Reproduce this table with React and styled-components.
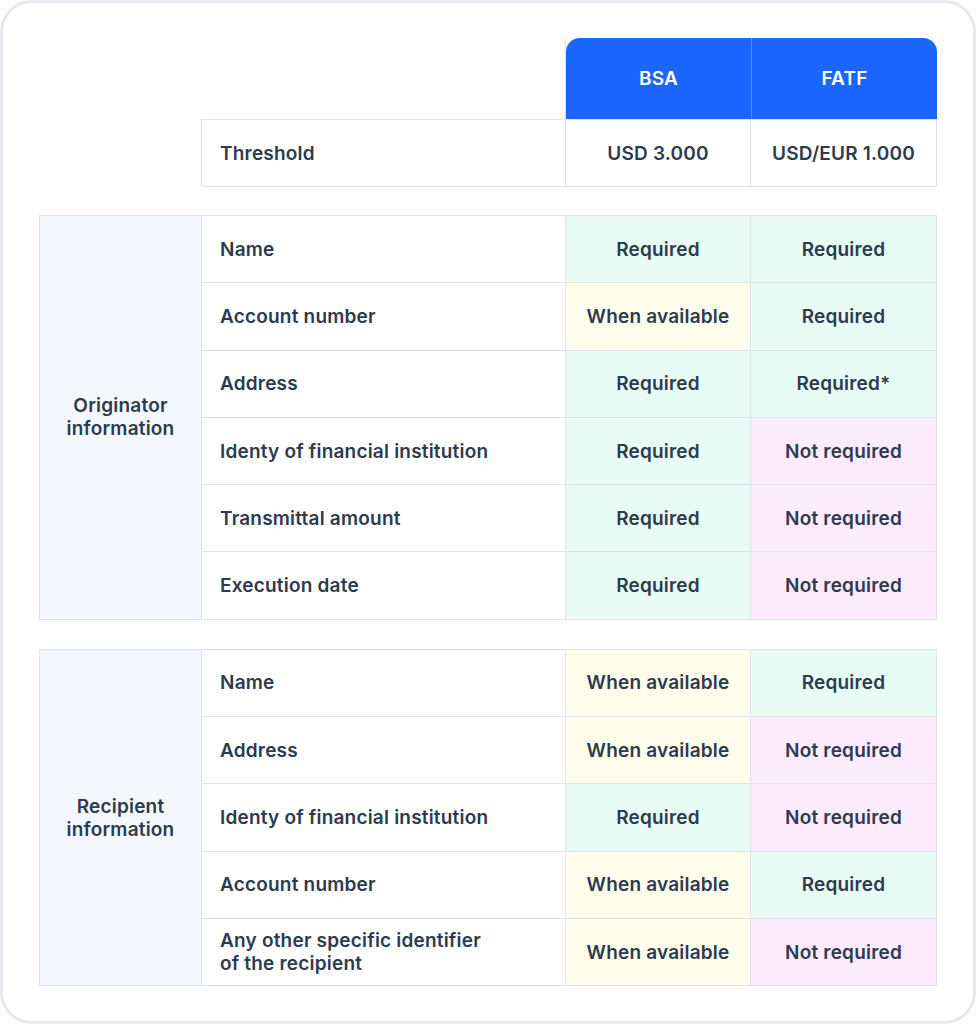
import React from 'react';
import styled, { createGlobalStyle } from 'styled-components';

const GlobalStyle = createGlobalStyle`
  html, body {
    margin: 0;
    padding: 0;
    background: #ffffff;
  }
  * {
    box-sizing: border-box;
  }
`;

const COLS = '162px 364px 185px 186px';
const LINE = '#dde2ec';

const TONES = {
  req: '#e8fcf5',
  avail: '#fffdeb',
  not: '#fbebfd',
};

const Card = styled.div`
  width: 976px;
  height: 1024px;
  border: 3px solid #e4e8ef;
  border-radius: 32px;
  background: #ffffff;
  padding: 35px 36px 0 36px;
  font-family: Inter, 'Noto Sans', sans-serif;
  font-weight: 600;
  font-size: 19px;
  letter-spacing: 0.2px;
  color: #2e3a4e;
  display: flex;
  flex-direction: column;
`;

const Top = styled.div`
  display: grid;
  grid-template-columns: ${COLS};
  grid-template-rows: 81px 68px;
  padding-left: 1px;
`;

const HeadGroup = styled.div`
  grid-column: 3 / span 2;
  display: grid;
  grid-template-columns: 185px 186px;
  margin-left: -1px;
  border-left: 1px solid ${LINE};
`;

const HeadCell = styled.div`
  background: #1a66ff;
  color: #ffffff;
  display: flex;
  align-items: center;
  justify-content: center;
  border-top-left-radius: ${(p) => (p.$first ? '14px' : '0')};
  border-top-right-radius: ${(p) => (p.$last ? '14px' : '0')};
  border-left: ${(p) => (p.$first ? 'none' : '1px solid #5a8fff')};
`;

const ThresholdRow = styled.div`
  grid-column: 2 / span 3;
  display: grid;
  grid-template-columns: 364px 185px 186px;
  margin-left: -1px;
  border-left: 1px solid ${LINE};
  border-top: 1px solid ${LINE};
`;

const Section = styled.div`
  display: grid;
  grid-template-columns: ${COLS};
  grid-auto-rows: 67.3px;
  border-top: 1px solid ${LINE};
  border-left: 1px solid ${LINE};
  margin-top: ${(p) => p.$gap}px;
`;

const GroupLabel = styled.div`
  grid-row: span ${(p) => p.$rows};
  background: #f4f7fe;
  border-right: 1px solid ${LINE};
  border-bottom: 1px solid ${LINE};
  display: flex;
  align-items: center;
  justify-content: center;
  text-align: center;
  line-height: 23px;
`;

const ItemCell = styled.div`
  border-right: 1px solid ${LINE};
  border-bottom: 1px solid ${LINE};
  display: flex;
  align-items: center;
  padding-left: 18px;
  line-height: 23px;
  background: #ffffff;
`;

const ValueCell = styled.div`
  border-right: 1px solid ${LINE};
  border-bottom: 1px solid ${LINE};
  display: flex;
  align-items: center;
  justify-content: center;
  background: ${(p) => TONES[p.$tone] || '#ffffff'};
`;

const originator = [
  ['Name', 'req', 'req'],
  ['Account number', 'avail', 'req'],
  ['Address', 'req', 'req*'],
  ['Identy of financial institution', 'req', 'not'],
  ['Transmittal amount', 'req', 'not'],
  ['Execution date', 'req', 'not'],
];

const recipient = [
  ['Name', 'avail', 'req'],
  ['Address', 'avail', 'not'],
  ['Identy of financial institution', 'req', 'not'],
  ['Account number', 'avail', 'req'],
  [['Any other specific identifier', 'of the recipient'], 'avail', 'not'],
];

const LABELS = {
  req: 'Required',
  'req*': 'Required*',
  avail: 'When available',
  not: 'Not required',
};

function Value({ kind }) {
  const tone = kind.replace('*', '');
  return <ValueCell $tone={tone}>{LABELS[kind]}</ValueCell>;
}

function Group({ label, rows, gap }) {
  return (
    <Section $gap={gap}>
      <GroupLabel $rows={rows.length}>
        {label[0]}
        <br />
        {label[1]}
      </GroupLabel>
      {rows.map(([item, bsa, fatf], i) => (
        <React.Fragment key={i}>
          <ItemCell>
            {Array.isArray(item) ? (
              <span>
                {item[0]}
                <br />
                {item[1]}
              </span>
            ) : (
              item
            )}
          </ItemCell>
          <Value kind={bsa} />
          <Value kind={fatf} />
        </React.Fragment>
      ))}
    </Section>
  );
}

export default function App() {
  return (
    <>
      <GlobalStyle />
      <Card>
        <Top>
          <div />
          <div />
          <HeadGroup>
            <HeadCell $first>BSA</HeadCell>
            <HeadCell $last>FATF</HeadCell>
          </HeadGroup>
          <div />
          <ThresholdRow>
            <ItemCell>Threshold</ItemCell>
            <ValueCell>USD 3.000</ValueCell>
            <ValueCell>USD/EUR 1.000</ValueCell>
          </ThresholdRow>
        </Top>
        <Group label={['Originator', 'information']} rows={originator} gap={28} />
        <Group label={['Recipient', 'information']} rows={recipient} gap={29} />
      </Card>
    </>
  );
}
